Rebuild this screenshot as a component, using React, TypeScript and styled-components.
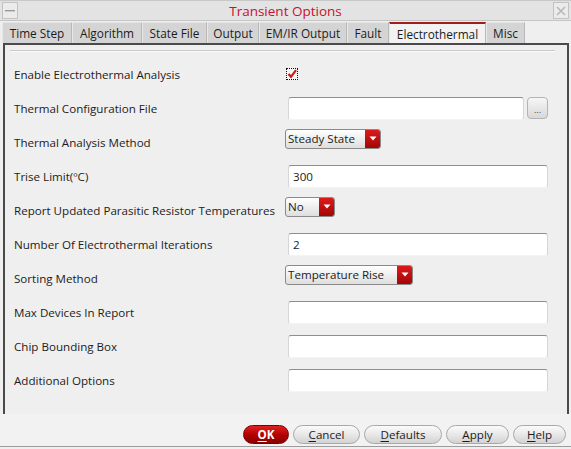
import React from "react";
import styled, { createGlobalStyle } from "styled-components";

const Global = createGlobalStyle`
  html, body { margin: 0; padding: 0; background: #efefef; }
  body {
    font-family: "Open Sans", "Noto Sans", sans-serif;
    font-size: 11.6px;
    color: #1c1c1c;
  }
  * { box-sizing: border-box; }
`;

const Window = styled.div`
  width: 571px;
  height: 449px;
  display: flex;
  flex-direction: column;
  background: #efefef;
  overflow: hidden;
`;

const TitleBar = styled.div`
  height: 21px;
  display: flex;
  align-items: center;
  padding: 0 2px;
  background: #e3e3e3;
  border-top: 1px solid #c8c8c8;
  border-bottom: 1px solid #c4c4c4;
`;

const TitleBox = styled.div`
  width: 16px;
  height: 17px;
  border: 1px solid #c2c2c2;
  background: #ebebeb;
  display: flex;
  align-items: center;
  justify-content: center;
  color: #9a9a9a;
`;

const Title = styled.div`
  flex: 1;
  text-align: center;
  color: #c8102e;
  font-size: 13.5px;
`;

const TabBar = styled.div`
  height: 22px;
  display: flex;
  align-items: stretch;
  padding-left: 2px;
  padding-top: 1px;
`;

const Tab = styled.div<{ $active?: boolean; $w: number }>`
  width: ${(p) => p.$w}px;
  display: flex;
  align-items: center;
  justify-content: center;
  font-size: 11.8px;
  color: #1c1c1c;
  background: ${(p) => (p.$active ? "#f2f2f2" : "#d4d4d4")};
  border-left: 1px solid #e8e8e8;
  border-right: 1px solid #b8b8b8;
  border-top: ${(p) => (p.$active ? "2px solid #a31c1c" : "1px solid #e4e4e4")};
`;

const Panel = styled.div`
  margin-left: 3px;
  width: 566px;
  height: 371px;
  border: 2px solid #4a4a4a;
  border-bottom: none;
  display: flex;
  flex-direction: column;
`;

const Separator = styled.div`
  margin: 5px 12px 0 5px;
  height: 2px;
  border-top: 1px solid #c9c9c9;
  border-bottom: 1px solid #fbfbfb;
`;

const Form = styled.div`
  margin-top: 5px;
  display: flex;
  flex-direction: column;
`;

const Row = styled.div`
  height: 34px;
  display: grid;
  grid-template-columns: 271px 1fr;
  align-items: center;
  padding-left: 9px;
`;

const Label = styled.div`
  white-space: nowrap;
`;

const Cell = styled.div<{ $raise?: boolean }>`
  display: flex;
  align-items: center;
  gap: 3px;
  margin-bottom: ${(p) => (p.$raise ? "7px" : "0")};
`;

const TextField = styled.div<{ $w?: number }>`
  margin-left: 3px;
  width: ${(p) => p.$w ?? 260}px;
  height: 23px;
  background: #ffffff;
  border: 1px solid #d6d6d6;
  border-top: 1px solid #8e8e8e;
  border-bottom-color: #f4f4f4;
  border-radius: 3px;
  display: flex;
  align-items: center;
  padding-left: 4px;
`;

const SmallButton = styled.div`
  width: 21px;
  height: 22px;
  border: 1px solid #b4b4b4;
  border-radius: 4px;
  background: linear-gradient(#f6f6f6, #d8d8d8);
  display: flex;
  align-items: flex-end;
  justify-content: center;
  padding-bottom: 4px;
  font-size: 9px;
  line-height: 9px;
  color: #444;
`;

const Select = styled.div<{ $w: number }>`
  width: ${(p) => p.$w}px;
  height: 20px;
  display: flex;
  border: 1px solid #8a8a8a;
  border-radius: 3px;
  overflow: hidden;
  background: linear-gradient(#ffffff, #dedede);
`;

const SelectText = styled.div`
  flex: 1;
  padding-left: 2px;
  display: flex;
  align-items: center;
  white-space: nowrap;
`;

const SelectArrow = styled.div`
  width: 15px;
  background: linear-gradient(#dd1a1a, #a30606);
  display: flex;
  align-items: center;
  justify-content: center;
`;

const CheckBox = styled.div`
  width: 12px;
  height: 12px;
  margin-left: 1px;
  border: 1px dotted #111;
  background: #f4f4f4;
  display: flex;
  align-items: center;
  justify-content: center;
`;

const Footer = styled.div`
  flex: 1;
  display: flex;
  justify-content: flex-end;
  align-items: flex-start;
  gap: 4px;
  padding: 11px 5px 0 0;
  border-bottom: 1px solid #9c9c9c;
  margin-bottom: 2px;
  background: #f2f2f2;
`;

const Button = styled.div<{ $w: number; $primary?: boolean }>`
  width: ${(p) => p.$w}px;
  height: 19px;
  border-radius: 10px;
  display: flex;
  align-items: center;
  justify-content: center;
  font-size: 11.6px;
  border: 1px solid ${(p) => (p.$primary ? "#7a0000" : "#a9a9a9")};
  background: ${(p) =>
    p.$primary
      ? "linear-gradient(#e02020, #b00000 55%, #8c0000)"
      : "linear-gradient(#fbfbfb, #e6e6e6 55%, #d2d2d2)"};
  color: ${(p) => (p.$primary ? "#ffffff" : "#1c1c1c")};
  font-weight: ${(p) => (p.$primary ? 700 : 400)};
  u { text-decoration-thickness: 1px; text-underline-offset: 2px; }
`;

const Arrow = () => (
  <svg width="8" height="5" viewBox="0 0 8 5">
    <path d="M0.5 0.5 L7.5 0.5 L4 4.5 Z" fill="#ffffff" />
  </svg>
);

const CheckMark = () => (
  <svg width="10" height="10" viewBox="0 0 10 10">
    <path d="M1.5 5 L4 7.8 L9 1.2" stroke="#d01515" strokeWidth="2.2" fill="none" />
  </svg>
);

const rows: { label: string; kind: string; value?: string; w?: number }[] = [
  { label: "Enable Electrothermal Analysis", kind: "check" },
  { label: "Thermal Configuration File", kind: "file" },
  { label: "Thermal Analysis Method", kind: "select", value: "Steady State", w: 96 },
  { label: "Trise Limit(ºC)", kind: "text", value: "300" },
  { label: "Report Updated Parasitic Resistor Temperatures", kind: "select", value: "No", w: 50 },
  { label: "Number Of Electrothermal Iterations", kind: "text", value: "2" },
  { label: "Sorting Method", kind: "select", value: "Temperature Rise", w: 128 },
  { label: "Max Devices In Report", kind: "text", value: "" },
  { label: "Chip Bounding Box", kind: "text", value: "" },
  { label: "Additional Options", kind: "text", value: "" },
];

const tabs = [
  { t: "Time Step", w: 70 },
  { t: "Algorithm", w: 70 },
  { t: "State File", w: 65 },
  { t: "Output", w: 52 },
  { t: "EM/IR Output", w: 88 },
  { t: "Fault", w: 42 },
  { t: "Electrothermal", w: 97, active: true },
  { t: "Misc", w: 39 },
];

export default function App() {
  return (
    <>
      <Global />
      <Window>
        <TitleBar>
          <TitleBox>
            <svg width="10" height="4" viewBox="0 0 10 4">
              <rect x="0" y="1" width="10" height="1.4" fill="#9a9a9a" />
            </svg>
          </TitleBox>
          <Title>Transient Options</Title>
          <TitleBox>
            <svg width="10" height="10" viewBox="0 0 10 10">
              <path d="M1 1 L9 9 M9 1 L1 9" stroke="#b8b8b8" strokeWidth="1.6" />
            </svg>
          </TitleBox>
        </TitleBar>
        <TabBar>
          {tabs.map((t) => (
            <Tab key={t.t} $w={t.w} $active={t.active}>
              {t.t}
            </Tab>
          ))}
        </TabBar>
        <Panel>
          <Separator />
          <Form>
            {rows.map((r) => (
              <Row key={r.label}>
                <Label>{r.label}</Label>
                {r.kind === "check" && (
                  <Cell>
                    <CheckBox>
                      <CheckMark />
                    </CheckBox>
                  </Cell>
                )}
                {r.kind === "file" && (
                  <Cell>
                    <TextField $w={236} />
                    <SmallButton>...</SmallButton>
                  </Cell>
                )}
                {r.kind === "select" && (
                  <Cell $raise>
                    <Select $w={r.w!}>
                      <SelectText>{r.value}</SelectText>
                      <SelectArrow>
                        <Arrow />
                      </SelectArrow>
                    </Select>
                  </Cell>
                )}
                {r.kind === "text" && (
                  <Cell>
                    <TextField>{r.value}</TextField>
                  </Cell>
                )}
              </Row>
            ))}
          </Form>
        </Panel>
        <Footer>
          <Button $w={46} $primary>
            <span><u>O</u>K</span>
          </Button>
          <Button $w={67}>
            <span><u>C</u>ancel</span>
          </Button>
          <Button $w={78}>
            <span><u>D</u>efaults</span>
          </Button>
          <Button $w={63}>
            <span><u>A</u>pply</span>
          </Button>
          <Button $w={53}>
            <span><u>H</u>elp</span>
          </Button>
        </Footer>
      </Window>
    </>
  );
}
